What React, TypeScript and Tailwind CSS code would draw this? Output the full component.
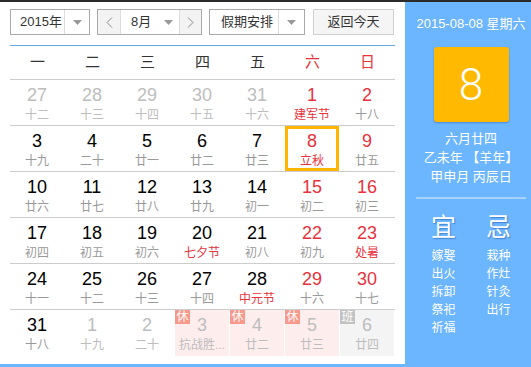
import React from 'react';

interface Day {
  num: number;
  lunar: string;
  other?: boolean;
  weekend?: boolean;
  festival?: boolean;
  badge?: '休' | '班';
  selected?: boolean;
}

const weekdays = ['一', '二', '三', '四', '五', '六', '日'];

const rows: Day[][] = [
  [
    { num: 27, lunar: '十二', other: true },
    { num: 28, lunar: '十三', other: true },
    { num: 29, lunar: '十四', other: true },
    { num: 30, lunar: '十五', other: true },
    { num: 31, lunar: '十六', other: true },
    { num: 1, lunar: '建军节', weekend: true, festival: true },
    { num: 2, lunar: '十八', weekend: true },
  ],
  [
    { num: 3, lunar: '十九' },
    { num: 4, lunar: '二十' },
    { num: 5, lunar: '廿一' },
    { num: 6, lunar: '廿二' },
    { num: 7, lunar: '廿三' },
    { num: 8, lunar: '立秋', weekend: true, festival: true, selected: true },
    { num: 9, lunar: '廿五', weekend: true },
  ],
  [
    { num: 10, lunar: '廿六' },
    { num: 11, lunar: '廿七' },
    { num: 12, lunar: '廿八' },
    { num: 13, lunar: '廿九' },
    { num: 14, lunar: '初一' },
    { num: 15, lunar: '初二', weekend: true },
    { num: 16, lunar: '初三', weekend: true },
  ],
  [
    { num: 17, lunar: '初四' },
    { num: 18, lunar: '初五' },
    { num: 19, lunar: '初六' },
    { num: 20, lunar: '七夕节', festival: true },
    { num: 21, lunar: '初八' },
    { num: 22, lunar: '初九', weekend: true },
    { num: 23, lunar: '处暑', weekend: true, festival: true },
  ],
  [
    { num: 24, lunar: '十一' },
    { num: 25, lunar: '十二' },
    { num: 26, lunar: '十三' },
    { num: 27, lunar: '十四' },
    { num: 28, lunar: '中元节', festival: true },
    { num: 29, lunar: '十六', weekend: true },
    { num: 30, lunar: '十七', weekend: true },
  ],
  [
    { num: 31, lunar: '十八' },
    { num: 1, lunar: '十九', other: true },
    { num: 2, lunar: '二十', other: true },
    { num: 3, lunar: '抗战胜...', other: true, badge: '休' },
    { num: 4, lunar: '廿二', other: true, badge: '休' },
    { num: 5, lunar: '廿三', other: true, badge: '休' },
    { num: 6, lunar: '廿四', other: true, badge: '班' },
  ],
];

const yi = ['嫁娶', '出火', '拆卸', '祭祀', '祈福'];
const ji = ['栽种', '作灶', '针灸', '出行'];

function Caret() {
  return (
    <svg width="9" height="5" viewBox="0 0 9 5">
      <path d="M0 0h9L4.5 5z" fill="#999" />
    </svg>
  );
}

function Chevron({ dir }: { dir: 'left' | 'right' }) {
  return (
    <svg width="7" height="11" viewBox="0 0 7 11">
      <polyline
        points={dir === 'left' ? '6,0.5 1,5.5 6,10.5' : '1,0.5 6,5.5 1,10.5'}
        fill="none"
        stroke="#888"
        strokeWidth="1"
      />
    </svg>
  );
}

function DayCell({ day }: { day: Day }) {
  const numColor = day.other
    ? 'text-[#bdbdbd]'
    : day.weekend
    ? 'text-[#e8323c]'
    : 'text-black';
  const lunarColor = day.other
    ? 'text-[#bdbdbd]'
    : day.festival
    ? 'text-[#e8323c]'
    : 'text-[#999]';
  const bg =
    day.badge === '休' ? 'bg-[#fdeeed]' : day.badge === '班' ? 'bg-[#f4f4f4]' : '';

  return (
    <div className="pr-px h-full">
      <div
        className={`relative h-full flex flex-col items-center pt-[5px] ${bg} ${
          day.selected ? 'shadow-[inset_0_0_0_3px_#ffb400]' : ''
        }`}
      >
        {day.badge && (
          <span
            className={`absolute left-0 top-0 w-[15px] h-[14px] flex items-center justify-center text-[12px] leading-none text-white ${
              day.badge === '休' ? 'bg-[#f7998c]' : 'bg-[#c2c2c2]'
            }`}
          >
            {day.badge}
          </span>
        )}
        <span className={`text-[18px] leading-[20px] ${numColor}`}>{day.num}</span>
        <span className={`mt-[2px] text-[12px] leading-[16px] whitespace-nowrap ${lunarColor}`}>
          {day.lunar}
        </span>
      </div>
    </div>
  );
}

export default function App() {
  return (
    <div
      className="w-[531px] h-[367px] bg-[#6cb5ff] border-t-2 border-[#2b2b2b] flex overflow-hidden"
      style={{ fontFamily: '"Liberation Sans", "Noto Sans CJK SC", sans-serif' }}
    >
      {/* Calendar */}
      <div className="w-[405px] h-[362px] bg-white pl-[10px] pr-[10px] pt-[7px] flex flex-col">
        {/* Toolbar */}
        <div className="flex items-center h-[26px] text-[13px] text-[#333] whitespace-nowrap">
          <div className="w-[80px] h-[26px] border border-[#a9a9a9] flex">
            <span className="flex-1 pl-[9px] leading-[24px]">2015年</span>
            <span className="w-[25px] border-l border-[#dcdcdc] flex items-center justify-center">
              <Caret />
            </span>
          </div>
          <div className="ml-[7px] w-[105px] h-[26px] border border-[#a9a9a9] flex">
            <span className="w-[22px] bg-[#f3f3f3] flex items-center justify-center">
              <Chevron dir="left" />
            </span>
            <span className="w-[60px] border-l border-r border-[#dcdcdc] flex items-center pl-[10px] pr-[6px] justify-between">
              <span className="leading-[24px]">8月</span>
              <Caret />
            </span>
            <span className="flex-1 bg-[#f3f3f3] flex items-center justify-center">
              <Chevron dir="right" />
            </span>
          </div>
          <div className="ml-[7px] w-[96px] h-[26px] border border-[#a9a9a9] flex">
            <span className="flex-1 pl-[11px] leading-[24px]">假期安排</span>
            <span className="w-[26px] border-l border-[#dcdcdc] flex items-center justify-center">
              <Caret />
            </span>
          </div>
          <button className="ml-[8px] w-[81px] h-[26px] border border-[#d0d0d0] bg-[#f5f5f5] text-[13px] text-[#333] leading-[24px]">
            返回今天
          </button>
        </div>

        <div className="mt-[10px] h-px bg-[#68a8ea]" />

        {/* Week header */}
        <div className="grid grid-cols-7 h-[34px] border-b border-[#cccccc] items-center text-[15px]">
          {weekdays.map((w, i) => (
            <span key={w} className={`text-center ${i >= 5 ? 'text-[#e8323c]' : 'text-[#333]'}`}>
              {w}
            </span>
          ))}
        </div>

        {/* Days */}
        {rows.map((row, r) => (
          <div
            key={r}
            className={`grid grid-cols-7 h-[46px] ${r < rows.length - 1 ? 'border-b border-[#cccccc]' : ''}`}
          >
            {row.map((d, i) => (
              <DayCell key={i} day={d} />
            ))}
          </div>
        ))}
      </div>

      {/* Side panel */}
      <div className="flex-1 pl-[6px] flex flex-col items-center text-white whitespace-nowrap">
        <div className="mt-[13px] text-[13px] leading-[18px]">2015-08-08 星期六</div>
        <div
          className="mt-[14px] w-[75px] h-[75px] rounded-[3px] bg-[#ffb900] shadow-[0_1px_2px_rgba(0,60,140,0.35)] flex items-center justify-center text-[44px] font-light leading-none"
          style={{ fontFamily: 'Roboto, "Liberation Sans", sans-serif' }}
        >
          8
        </div>
        <div className="mt-[7px] flex flex-col items-center text-[13px] leading-[19px]">
          <span>六月廿四</span>
          <span>乙未年 【羊年】</span>
          <span>甲申月 丙辰日</span>
        </div>
        <div className="mt-[11px] w-[110px] h-[2px] bg-white/40" />
        <div className="mt-[14px] grid grid-cols-2 w-[110px]">
          <div className="flex flex-col items-center">
            <span className="text-[25px] leading-[28px] [text-shadow:1px_1px_1px_rgba(0,60,140,0.4)]">宜</span>
            <div className="mt-[6px] flex flex-col items-center text-[12px] leading-[18px]">
              {yi.map((t) => (
                <span key={t}>{t}</span>
              ))}
            </div>
          </div>
          <div className="flex flex-col items-center">
            <span className="text-[25px] leading-[28px] [text-shadow:1px_1px_1px_rgba(0,60,140,0.4)]">忌</span>
            <div className="mt-[6px] flex flex-col items-center text-[12px] leading-[18px]">
              {ji.map((t) => (
                <span key={t}>{t}</span>
              ))}
            </div>
          </div>
        </div>
      </div>
    </div>
  );
}
